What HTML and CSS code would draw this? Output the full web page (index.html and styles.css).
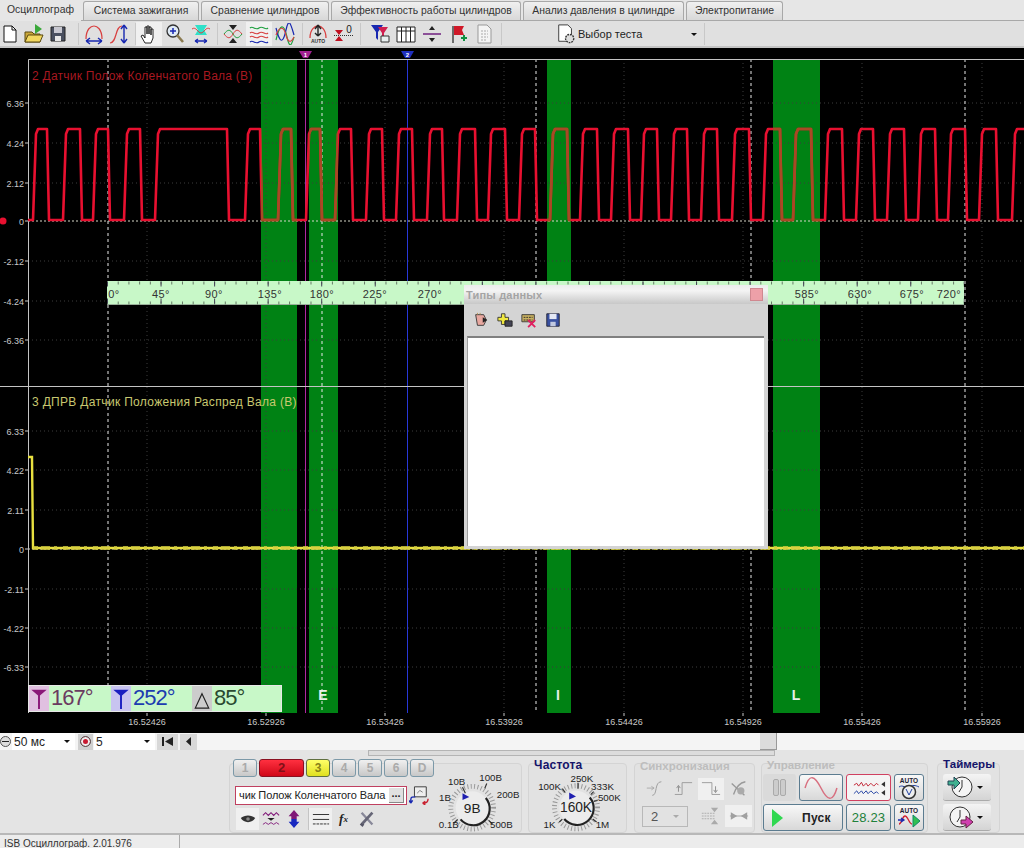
FILE: index.html
```html
<!DOCTYPE html>
<html>
<head>
    <meta charset="utf-8">
    <link rel="stylesheet" href="styles.css">
</head>
<body>
    <div class="tabs">
        <div class="tab active">Осциллограф</div>
        <div class="tab tab-w116">Система зажигания</div>
        <div class="tab tab-w128">Сравнение цилиндров</div>
        <div class="tab tab-w190">Эффективность работы цилиндров</div>
        <div class="tab tab-w161">Анализ давления в цилиндре</div>
        <div class="tab tab-w97">Электропитание</div>
    </div>

    <div class="toolbar">
        <div class="tb-group g1">
            <div class="tb-btn"><svg viewBox="0 0 22 22"><path d="M5 3h8l4 4v12H5z" fill="#fff" stroke="#111"/><path d="M13 3v4h4" fill="none" stroke="#111"/></svg></div>
            <div class="tb-btn"><svg viewBox="0 0 22 22"><path d="M2 9h7l2 2h6v8H2z" fill="#c9a63a" stroke="#5a4a10"/><path d="M2 19l3-7h15l-3 7z" fill="#f2d860" stroke="#5a4a10"/><path d="M12 1l7 5-7 5z" fill="#3aa83a"/></svg></div>
            <div class="tb-btn"><svg viewBox="0 0 22 22"><path d="M4 4h14v14H4z" fill="#4a5060" stroke="#222"/><path d="M7 4h8v6H7z" fill="#c8c8d0"/><path d="M8 13h6v5H8z" fill="#e8e8e8"/></svg></div>
        </div>
        <div class="tb-group g2">
            <div class="tb-btn"><svg viewBox="0 0 22 22"><path d="M3 16C3 6 8 3 11 3s8 3 8 13" fill="none" stroke="#d84040" stroke-width="1.2"/><path d="M3 18h16M3 18l4-3M3 18l4 3M19 18l-4-3M19 18l-4 3" fill="none" stroke="#1828b0" stroke-width="1.4"/></svg></div>
            <div class="tb-btn"><svg viewBox="0 0 22 22"><path d="M1 20C8 20 6 3 13 3" fill="none" stroke="#d84040" stroke-width="1.2"/><path d="M15 2v18M15 2l-3 4M15 2l3 4M15 20l-3-4M15 20l3-4" fill="none" stroke="#1828b0" stroke-width="1.4"/></svg></div>
        </div>
        <div class="tb-group g3">
            <div class="tb-btn on"><svg viewBox="0 0 22 22"><path d="M7 20l-4-7 2-1 2 3V4h2v7V3h2v8V4h2v8V6h2v9l-2 5z" fill="#fff" stroke="#111" stroke-width=".9"/></svg></div>
            <div class="tb-btn"><svg viewBox="0 0 22 22"><circle cx="9" cy="8" r="6" fill="#dfeaf5" stroke="#333" stroke-width="1.3"/><path d="M6 8h6M9 5v6" stroke="#1828b0" stroke-width="1.5"/><path d="M13 12l6 7" stroke="#8a7a50" stroke-width="2.6"/></svg></div>
            <div class="tb-btn"><svg viewBox="0 0 22 22"><path d="M5 2h12l-3 5 3 5H5l3-5z" fill="#30e0c8"/><path d="M2 6c4-3 6 4 9 4s5-7 9-4" fill="none" stroke="#d84040"/><path d="M5 18h12M5 18l3-2M5 18l3 2M17 18l-3-2M17 18l-3 2" fill="none" stroke="#1828b0" stroke-width="1.3"/></svg></div>
        </div>
        <div class="tb-group g4">
            <div class="tb-btn"><svg viewBox="0 0 22 22"><path d="M2 11c4-5 6-5 9 0s5 5 9 0" fill="none" stroke="#20a040"/><path d="M2 11c4 5 6 5 9 0s5-5 9 0" fill="none" stroke="#d84040"/><path d="M7 2h8l-4 5zM7 20h8l-4-5z" fill="#222"/></svg></div>
            <div class="tb-btn on"><svg viewBox="0 0 22 22"><path d="M2 5c3-3 5 3 9 0s6 3 9 0" fill="none" stroke="#20a040" stroke-width="1.2"/><path d="M2 10c3-3 5 3 9 0s6 3 9 0M2 14c3-3 5 3 9 0s6 3 9 0" fill="none" stroke="#d84040" stroke-width="1.2"/><path d="M2 19c3-3 5 3 9 0s6 3 9 0" fill="none" stroke="#1828b0" stroke-width="1.2"/></svg></div>
            <div class="tb-btn"><svg viewBox="0 0 22 22"><path d="M2 17C6 0 10 0 13 14s5 6 7 0" fill="none" stroke="#20a040" stroke-width="1.2"/><path d="M2 5c4 16 7 16 10 2s5-5 8 5" fill="none" stroke="#1828b0" stroke-width="1.2"/><path d="M2 12c4-10 8-8 10 0s5 8 8 2" fill="none" stroke="#d84040" stroke-width="1.2"/></svg></div>
        </div>
        <div class="tb-group g5">
            <div class="tb-btn"><svg viewBox="0 0 22 22"><path d="M3 15C3 6 8 3 11 3s8 3 8 12" fill="none" stroke="#d84040" stroke-width="1.3"/><path d="M11 2v11M11 2L8 6M11 2l3 4M11 13l-3-3M11 13l3-3" fill="none" stroke="#222" stroke-width="1.4"/><text class="auto-text" x="11" y="20">AUTO</text></svg></div>
            <div class="tb-btn"><svg viewBox="0 0 22 22"><path d="M2 7h8l-4 5zM2 18h8l-4-5z" fill="#c01020"/><path d="M1 12.5h20" stroke="#333" stroke-dasharray="1 1"/><text class="zero-text" x="16" y="10">0</text></svg></div>
        </div>
        <div class="tb-group g6">
            <div class="tb-btn"><svg viewBox="0 0 22 22"><path d="M2 2h12l-5 7v8l-2-2V9z" fill="#1828b0"/><path d="M9 4h10l-4 6v3h-2v-3z" fill="#d02050"/><path d="M12 13h8v6h-8z" fill="#e8f0f0" stroke="#333"/></svg></div>
            <div class="tb-btn"><svg viewBox="0 0 22 22"><path d="M2 4h18v15H2z" fill="#fff" stroke="#222"/><path d="M2 8h18M6.5 4v15M11 4v15M15.5 4v15" stroke="#222"/></svg></div>
            <div class="tb-btn"><svg viewBox="0 0 22 22"><path d="M2 11h18" stroke="#702080" stroke-width="1.5"/><path d="M11 3l-3 4h6zM11 19l-3-4h6z" fill="#222"/></svg></div>
            <div class="tb-btn"><svg viewBox="0 0 22 22"><path d="M6 3v17" stroke="#444" stroke-width="1.5"/><path d="M7 3h10l-2 4 2 5H7z" fill="#d01828"/><path d="M14 15h6M17 12v6" stroke="#109040" stroke-width="2"/></svg></div>
            <div class="tb-btn"><svg viewBox="0 0 22 22"><path d="M5 2h9l4 4v14H5z" fill="#f4f4f4" stroke="#999"/><path d="M8 8h7M8 11h7M8 14h7M8 17h5" stroke="#aaa" stroke-dasharray="2 1"/></svg></div>
        </div>
        <div class="test-select">
            <svg viewBox="0 0 22 22"><path d="M3 1h10l4 4v14H3z" fill="#fff" stroke="#333"/><circle cx="15" cy="16" r="4.5" fill="#ddd" stroke="#333" stroke-dasharray="2 1" stroke-width="1.5"/></svg>
            <span class="test-label">Выбор теста</span>
            <span class="arrow-down"></span>
        </div>
    </div>

    <div class="scope">
        <svg class="plot" viewBox="0 48 1024 685">
            <defs>
                <clipPath id="bandClip">
                    <rect x="261" y="59" width="36" height="654"/>
                    <rect x="309" y="59" width="29" height="654"/>
                    <rect x="547" y="59" width="24" height="654"/>
                    <rect x="773" y="59" width="47" height="654"/>
                </clipPath>
                <path id="crank" d="M28 220H33L36 134 38 129H47L49 220H63L66 134 68 129H80L82 220H93L96 134 98 129H108L110 220H124L127 134 129 129H140L142 220H155L158 134 160 129H227L229 220H245L248 134 250 129H260L262 220H278L281 134 283 129H291L293 220H306L309 134 311 129H320L322 220H335L338 134 340 129H351L353 220H366L369 134 371 129H382L384 220H396L399 134 401 129H412L414 220H427L430 134 432 129H442L444 220H457L460 134 462 129H475L477 220H488L491 134 493 129H505L507 220H519L522 134 524 129H535L537 220H550L553 134 555 129H567L569 220H580L583 134 585 129H597L599 220H611L614 134 616 129H628L630 220H641L644 134 646 129H657L659 220H671L674 134 676 129H687L689 220H701L704 134 706 129H717L719 220H732L735 134 737 129H749L751 220H763L766 134 768 129H780L782 220H793L796 134 798 129H811L813 220H825L828 134 830 129H842L844 220H856L859 134 861 129H873L875 220H887L890 134 892 129H904L906 220H918L921 134 923 129H935L937 220H948L951 134 953 129H965L967 220H979L982 134 984 129H996L998 220H1012L1015 134 1017 129H1024"/>
            </defs>

            <g fill="#008214">
                <rect x="261" y="59" width="36" height="654"/>
                <rect x="309" y="59" width="29" height="654"/>
                <rect x="547" y="59" width="24" height="654"/>
                <rect x="773" y="59" width="47" height="654"/>
            </g>

            <!-- dim grid -->
            <g class="grid-dim">
                <path d="M28 103H1024M28 143H1024M28 183H1024M28 261H1024M28 301H1024M28 340H1024M28 431H1024M28 470H1024M28 510H1024M28 589H1024M28 628H1024M28 667H1024"/>
                <path d="M147 59V713M266 59V713M385 59V713M504 59V713M624 59V713M743 59V713M862 59V713M982 59V713"/>
            </g>
            <path class="grid-deg" d="M108 59V713M322 59V713M536 59V713M751 59V713M965 59V713"/>
            <path class="grid-zero" d="M28 221H1024M28 549H1024"/>

            <path class="cursor-1" d="M305.5 59V713"/>
            <path class="cursor-2" d="M407.5 59V713"/>
            <path d="M299 51h13l-4 7h-5z" fill="#a02090"/>
            <path d="M401 51h13l-4 7h-5z" fill="#2030c0"/>
            <text class="cursor-num" x="305.5" y="57">1</text>
            <text class="cursor-num" x="407.5" y="57">2</text>

            <path class="frame" d="M28.5 713V59.5H1024M0 386.5H1024"/>

            <use href="#crank" class="trace-red"/>
            <use href="#crank" class="trace-red-band" clip-path="url(#bandClip)"/>
            <path class="trace-yellow" d="M28 457H32L33 548H1024"/>
            <path class="trace-yellow-noise" d="M33 548H1024"/>

            <circle cx="3" cy="221" r="3.5" fill="#e81030"/>

            <text class="label-red" x="32" y="80">2 Датчик Полож Коленчатого Вала (В)</text>
            <text class="label-yellow" x="32" y="406">3 ДПРВ Датчик Положения Распред Вала (В)</text>

            <g class="y-axis">
                <text x="24" y="107">6.36</text>
                <text x="24" y="147">4.24</text>
                <text x="24" y="187">2.12</text>
                <text x="24" y="225">0</text>
                <text x="24" y="265">-2.12</text>
                <text x="24" y="305">-4.24</text>
                <text x="24" y="344">-6.36</text>
                <text x="24" y="435">6.33</text>
                <text x="24" y="474">4.22</text>
                <text x="24" y="514">2.11</text>
                <text x="24" y="553">0</text>
                <text x="24" y="593">-2.11</text>
                <text x="24" y="632">-4.22</text>
                <text x="24" y="671">-6.33</text>
            </g>
            <path class="axis-ticks" d="M25 103H28M25 143H28M25 183H28M25 221H28M25 261H28M25 301H28M25 340H28M25 431H28M25 470H28M25 510H28M25 549H28M25 589H28M25 628H28M25 667H28M147 713V716M266 713V716M385 713V716M504 713V716M624 713V716M743 713V716M862 713V716M982 713V716"/>

            <g class="x-axis">
                <text x="147" y="725">16.52426</text>
                <text x="266" y="725">16.52926</text>
                <text x="385" y="725">16.53426</text>
                <text x="504" y="725">16.53926</text>
                <text x="624" y="725">16.54426</text>
                <text x="743" y="725">16.54926</text>
                <text x="862" y="725">16.55426</text>
                <text x="982" y="725">16.55926</text>
            </g>

            <g class="band-labels">
                <text x="277" y="700">D</text>
                <text x="323" y="700">E</text>
                <text x="558" y="700">I</text>
                <text x="796" y="700">L</text>
            </g>

            <!-- degree ruler -->
            <rect x="107" y="281" width="857" height="23" fill="#c8f8c8"/>
            <path d="M107 304.5H964" stroke="#9ab09a"/>
            <path class="ruler-minor" d="M107 283H964M107 303H964"/>
            <path class="ruler-major" d="M107 284H964M107 301H964"/>
            <g class="ruler-text">
                <text x="114" y="298">0°</text>
                <text x="161" y="298">45°</text>
                <text x="214" y="298">90°</text>
                <text x="270" y="298">135°</text>
                <text x="322" y="298">180°</text>
                <text x="375" y="298">225°</text>
                <text x="430" y="298">270°</text>
                <text x="807" y="298">585°</text>
                <text x="860" y="298">630°</text>
                <text x="912" y="298">675°</text>
                <text x="949" y="298">720°</text>
            </g>
        </svg>

        <div class="readout">
            <div class="rd-icon rd-mag"><svg viewBox="0 0 20 26"><path d="M2 4h16l-7 6v14H9V10z" fill="#8a1878"/></svg></div>
            <div class="rd-val rd-val-mag">167°</div>
            <div class="rd-icon rd-blue"><svg viewBox="0 0 20 26"><path d="M2 4h16l-7 6v14H9V10z" fill="#1a20c0"/></svg></div>
            <div class="rd-val rd-val-blue">252°</div>
            <div class="rd-icon rd-delta"><svg viewBox="0 0 20 26"><path d="M10 8l7 15H3z" fill="none" stroke="#222" stroke-width="1.2"/></svg></div>
            <div class="rd-val rd-val-delta">85°</div>
        </div>

        <div class="dialog">
            <div class="dialog-title">
                <span>Типы данных</span>
                <span class="dialog-close"></span>
            </div>
            <div class="dialog-tools">
                <svg viewBox="0 0 18 18"><path d="M3 3h9l3 6-3 6H5z" fill="#e8a8a0" stroke="#333"/><path d="M5 3V1M8 3V1" stroke="#b89050"/><path d="M11 6l5 3-5 3z" fill="#222"/></svg>
                <svg viewBox="0 0 18 18"><path d="M1 6h4V2h4v4h4v4H9v4H5v-4H1z" fill="#f0e840" stroke="#333"/><path d="M9 10h8v6H9z" fill="#445" stroke="#222"/></svg>
                <svg viewBox="0 0 18 18"><path d="M1 3h14v8H1z" fill="#c8b060" stroke="#333"/><path d="M3 6h10M3 9h10" stroke="#222" stroke-dasharray="2 1"/><path d="M8 9l8 8M16 9l-8 8" stroke="#e02060" stroke-width="2"/></svg>
                <svg viewBox="0 0 18 18"><path d="M2 2h14v14H2z" fill="#3850a0" stroke="#223"/><path d="M5 2h8v6H5z" fill="#e4e8f4"/><path d="M6 11h6v5H6z" fill="#c0c8e0"/></svg>
            </div>
            <div class="dialog-list"></div>
        </div>
    </div>

    <div class="timebar">
        <span class="round-btn minus"></span>
        <div class="time-select w-63"><span>50 мс</span><span class="arrow-down"></span></div>
        <span class="round-box"><span class="round-btn plus"></span></span>
        <div class="time-select w-61"><span>5</span><span class="arrow-down"></span></div>
        <div class="nav-btn w-21"><svg viewBox="0 0 13 9"><path d="M1 0h2v9H1zM12 0v9L4 4.5z" fill="#222"/></svg></div>
        <div class="nav-btn w-17"><svg viewBox="0 0 7 9"><path d="M6 0v9L1 4.5z" fill="#222"/></svg></div>
        <div class="thumb"></div>
    </div>

    <div class="panel">
        <div class="h-track"></div>

        <div class="group grp-channel">
            <div class="ch-left">
                <div class="channels">
                    <div class="ch">1</div>
                    <div class="ch ch-red">2</div>
                    <div class="ch ch-yellow">3</div>
                    <div class="ch">4</div>
                    <div class="ch">5</div>
                    <div class="ch">6</div>
                    <div class="ch">D</div>
                </div>
                <div class="field-row">
                    <div class="ch-field">
                        <span class="ch-text">чик Полож Коленчатого Вала</span>
                        <span class="dots-btn">...</span>
                    </div>
                    <svg class="swap-icon" viewBox="0 0 22 22"><path d="M6 2h13v11H6z" fill="#eee" stroke="#333"/><path d="M9 9l3-3 3 2" fill="none" stroke="#777"/><path d="M2 20v-4c0-3 2-3 5-3M2 20l-2-3M2 20l2-3" fill="none" stroke="#1828b0" stroke-width="1.5"/><path d="M21 15c0 3-2 5-6 5M15 20l3-2M15 20l3 2" fill="none" stroke="#c82030" stroke-width="1.5"/></svg>
                </div>
                <div class="ch-tools">
                    <div class="ch-tool on"><svg viewBox="0 0 20 20"><path d="M2 9c4-4 12-4 16 0-3 6-13 6-16 0z" fill="#333"/><circle cx="10" cy="10" r="2" fill="#888"/></svg></div>
                    <div class="ch-tool"><svg viewBox="0 0 20 20"><path d="M1 6l3-3 3 3 3-3 3 3 3-3 3 3" fill="none" stroke="#801878" stroke-width="1.2"/><path d="M6 9h8l-4 3z" fill="#222"/><path d="M1 16l3-2 3 2 3-2 3 2 3-2 3 2" fill="none" stroke="#801878"/></svg></div>
                    <div class="ch-tool"><svg viewBox="0 0 20 20"><path d="M10 0l6 7h-3v3H7V7H4z" fill="#801878"/><path d="M10 20l6-7h-3v-3H7v3H4z" fill="#1828c0"/></svg></div>
                    <div class="ch-tool on sep-left"><svg viewBox="0 0 20 20"><path d="M1 5h18M1 10.5h18" stroke="#222"/><path d="M1 15.5h18" stroke="#222" stroke-dasharray="3 1"/></svg></div>
                    <div class="ch-tool fx">f<sub>x</sub></div>
                    <div class="ch-tool"><svg viewBox="0 0 20 20"><path d="M4 3l12 13" stroke="#889" stroke-width="2.5"/><path d="M16 3L5 15" stroke="#667" stroke-width="3"/><path d="M2 16l3 3 2-3-3-2z" fill="#556"/></svg></div>
                </div>
            </div>
            <svg class="knob-a" viewBox="437 763 85 70">
                <circle cx="473" cy="808" r="22" class="knob-ticks"/>
                <circle cx="473" cy="808" r="17" fill="#ececec"/>
                <path d="M461 820A17 17 0 0 0 487 798" class="knob-arc"/>
                <path d="M466 793l-3-6M486 788l2-5M458 820l-4 4M490 821l4 4" stroke="#333" stroke-width="1.2"/>
                <path d="M463 793l7 4-7 3z" fill="#2020b0"/>
                <text class="knob-val" x="473" y="813">9В</text>
                <g class="knob-label">
                    <text x="457" y="785">10В</text>
                    <text x="492" y="781">100В</text>
                    <text x="510" y="798">200В</text>
                    <text x="503" y="829">500В</text>
                    <text x="449" y="829">0.1В</text>
                    <text x="445" y="801">1В</text>
                </g>
            </svg>
        </div>

        <div class="group grp-freq">
            <div class="grp-title">Частота</div>
            <svg class="knob-b" viewBox="528 764 99 69">
                <circle cx="576" cy="808" r="22" class="knob-ticks"/>
                <circle cx="576" cy="808" r="17" fill="#ececec"/>
                <path d="M564 820A17 17 0 0 0 590 798" class="knob-arc"/>
                <path d="M578 783v6M562 789l3 4M594 792l-3 3M598 801l-4 1M559 823l3-3M597 823l-4-3" stroke="#333" stroke-width="1.2"/>
                <path d="M569 793l7 4-7 3z" fill="#2020b0"/>
                <text class="knob-val" x="576" y="813">160K</text>
                <g class="knob-label">
                    <text x="582" y="782">250K</text>
                    <text x="549" y="790">100K</text>
                    <text x="603" y="790">333K</text>
                    <text x="610" y="802">500K</text>
                    <text x="549" y="829">1K</text>
                    <text x="603" y="829">1M</text>
                </g>
            </svg>
        </div>

        <div class="group grp-sync">
            <div class="grp-title off">Синхронизация</div>
            <div class="sync-row">
                <div class="sync-btn"><svg viewBox="0 0 22 22"><path d="M8 18C14 18 10 3 18 3" fill="none" stroke="#999"/><path d="M2 10h8M7 8l3 2-3 2" fill="none" stroke="#aaa"/></svg></div>
                <div class="sync-btn"><svg viewBox="0 0 22 22"><path d="M2 17h8V4h11" fill="none" stroke="#999"/><path d="M6 14V8M4 10l2-3 2 3" fill="none" stroke="#888"/></svg></div>
                <div class="sync-btn on"><svg viewBox="0 0 22 22"><path d="M1 4h11v13h9" fill="none" stroke="#999"/><path d="M16 8v6M14 12l2 3 2-3" fill="none" stroke="#888"/></svg></div>
                <div class="sync-btn"><svg viewBox="0 0 22 22"><path d="M3 5l14 13M18 3C12 4 8 8 5 17" fill="none" stroke="#999" stroke-width="1.5"/><circle cx="13" cy="13" r="4" fill="#aaa"/></svg></div>
            </div>
            <div class="sync-row">
                <div class="sync-select"><span>2</span><span class="arrow-down off"></span></div>
                <div class="sync-btn"><svg viewBox="0 0 22 22"><path d="M2 8h14M2 11h14M2 14h14" stroke="#aaa" stroke-dasharray="2 1"/><path d="M12 2h8l-4 5zM12 20h8l-4-5z" fill="#aaa"/></svg></div>
                <div class="sync-btn on"><svg viewBox="0 0 22 22"><path d="M2 7l7 4-7 4zM20 7l-7 4 7 4z" fill="#a0a0a0"/><path d="M1 11h20" stroke="#a0a0a0"/></svg></div>
            </div>
        </div>

        <div class="group grp-ctrl">
            <div class="grp-title off">Управление</div>
            <div class="ctrl-grid">
                <div class="ctrl flat"><span class="pause"></span><span class="pause"></span></div>
                <div class="ctrl"><svg viewBox="0 0 32 20"><path d="M1 10C5 -4 10 -2 16 10s11 14 15 0" fill="none" stroke="#d87080" stroke-width="1.4"/></svg></div>
                <div class="ctrl red-edge"><svg viewBox="0 0 36 20"><path d="M2 7l3-2 2 3 3-4 2 4 3-3 2 3 3-3 3 3 3-3 2 2" fill="none" stroke="#c02030"/><path d="M2 16l3-3 2 3 3-3 2 3 3-3 2 3 3-3 3 3 3-2 2 2" fill="none" stroke="#2040a0"/><path d="M35 3v6l-4-3zM35 12v6l-4-3z" fill="#333"/></svg></div>
                <div class="ctrl"><svg viewBox="0 0 24 24"><text class="auto-text dark" x="12" y="7">AUTO</text><path d="M2 11c4-3 6 2 10 0s6-2 10 0" fill="none" stroke="#2040a0"/><circle cx="12" cy="16" r="6.5" fill="#eee" stroke="#333" stroke-width="1.5"/><path d="M9 13l3 6 3-6" fill="none" stroke="#2040a0"/></svg></div>
                <div class="ctrl start">
                    <svg viewBox="0 0 14 20"><path d="M2 1l11 9-11 9z" fill="#30d850"/></svg>
                    <span class="start-text">Пуск</span>
                </div>
                <div class="ctrl rate">28.23</div>
                <div class="ctrl"><svg viewBox="0 0 24 24"><text class="auto-text dark" x="12" y="7">AUTO</text><path d="M2 18c3 0 3-8 6-8s4 8 7 8" fill="none" stroke="#d02030" stroke-width="1.3"/><path d="M1 14h6M4 12l3 2-3 2" fill="none" stroke="#1828b0" stroke-width="1.3"/><path d="M16 9l7 6-7 6z" fill="#30c050" stroke="#186"/></svg></div>
            </div>
        </div>

        <div class="group grp-timers">
            <div class="grp-title">Таймеры</div>
            <div class="timer-btn">
                <svg viewBox="0 0 28 24"><circle cx="15" cy="12" r="10" fill="#f4f4f4" stroke="#333"/><path d="M15 5v7l-3 5" fill="none" stroke="#333"/><path d="M1 6h6V2l6 6-6 6v-4H1z" fill="#40b090" stroke="#245"/></svg>
                <span class="arrow-down"></span>
            </div>
            <div class="timer-btn">
                <svg viewBox="0 0 28 24"><circle cx="13" cy="12" r="10" fill="#f4f4f4" stroke="#333"/><path d="M13 5v7l-3 5" fill="none" stroke="#333"/><path d="M14 15h5v-4l7 6-7 6v-4h-5z" fill="#d040b0" stroke="#624"/></svg>
                <span class="arrow-down"></span>
            </div>
        </div>
    </div>

    <div class="status">
        <div class="status-cell">ISB Осциллограф. 2.01.976</div>
    </div>
</body>
</html>
```

FILE: styles.css
```css
html, body {
    margin: 0;
    padding: 0;
}

body {
    width: 1024px;
    height: 848px;
    overflow: hidden;
    display: flex;
    flex-direction: column;
    font-family: 'Liberation Sans', Arial, sans-serif;
    font-size: 11px;
    color: #222;
    background: #e4e4e4;
}

/* tabs */
.tabs {
    height: 21px;
    display: flex;
    align-items: flex-end;
    gap: 2px;
    background: #e6e6e6;
    border-bottom: 1px solid #a8a8a8;
    box-sizing: border-box;
}

.tab {
    height: 19px;
    line-height: 18px;
    padding: 0;
    text-align: center;
    box-sizing: border-box;
    background: linear-gradient(#f0f0f0, #d8d8d8);
    border: 1px solid #a8a8a8;
    border-bottom: none;
    border-radius: 3px 3px 0 0;
    color: #333;
    font-size: 10.4px;
}

.tab.active {
    width: 81px;
    height: 20px;
    background: #e6e6e6;
    border: none;
    margin-bottom: -1px;
}

.tab-w116 { width: 116px; }
.tab-w128 { width: 128px; }
.tab-w190 { width: 190px; }
.tab-w161 { width: 161px; }
.tab-w97 { width: 97px; }

/* toolbar */
.toolbar {
    height: 27px;
    display: flex;
    align-items: stretch;
    background: #e0e0e0;
    border-bottom: 2px solid #c4c4c4;
    box-sizing: border-box;
}

.tb-group {
    display: flex;
    align-items: center;
    border-right: 1px solid #c8c8c8;
    margin: 2px 0 1px;
}

.g1 { margin-left: -2px; padding-right: 8px; }
.g2 { padding: 0 2px; }
.g3 { padding-right: 3px; }
.g4 { padding: 0 4px 0 2px; }
.g5 { padding: 0 3px 0 2px; }
.g6 { padding: 0 4px 0 6px; }
.g1 .tb-btn { width: 24px; }

.tb-btn {
    width: 26px;
    height: 24px;
    display: flex;
    align-items: center;
    justify-content: center;
}

.tb-btn.on {
    background: #f0f0f0;
}

.tb-btn svg {
    width: 22px;
    height: 22px;
}

.auto-text {
    font-size: 5px;
    font-weight: bold;
    text-anchor: middle;
    fill: #333;
}

.auto-text.dark {
    font-size: 6.5px;
    fill: #223;
}

.zero-text {
    font-size: 10px;
    text-anchor: middle;
    fill: #222;
}

.test-select {
    width: 203px;
    display: flex;
    align-items: center;
    padding-left: 54px;
    box-sizing: border-box;
    border-right: 1px solid #c8c8c8;
    margin: 2px 0 1px;
}

.test-select svg {
    width: 20px;
    height: 20px;
}

.test-label {
    margin-left: 2px;
    font-size: 11px;
    width: 113px;
}

.arrow-down {
    display: inline-block;
    width: 0;
    height: 0;
    border-left: 3px solid transparent;
    border-right: 3px solid transparent;
    border-top: 3px solid #111;
}

.arrow-down.off {
    border-top-color: #aaa;
}

/* scope area */
.scope {
    position: relative;
    height: 685px;
    background: #000;
}

.plot {
    display: block;
    width: 1024px;
    height: 685px;
}

.grid-dim path {
    fill: none;
    stroke: #3c3c3c;
    stroke-dasharray: 1 3;
}

.grid-deg {
    fill: none;
    stroke: #e8e8e8;
    stroke-dasharray: 3 3;
}

.grid-zero {
    fill: none;
    stroke: #d8d8c8;
    stroke-dasharray: 2 2;
}

.cursor-1 { stroke: #b028a0; }
.cursor-2 { stroke: #2838d8; }

.cursor-num {
    font-size: 6px;
    font-weight: bold;
    text-anchor: middle;
    fill: #fff;
}

.frame {
    fill: none;
    stroke: #c4c4c4;
}

.trace-red {
    fill: none;
    stroke: #e81030;
    stroke-width: 2.6;
    stroke-linejoin: round;
}

.trace-red-band {
    fill: none;
    stroke: #a84a24;
    stroke-width: 2.6;
    stroke-linejoin: round;
}

.trace-yellow {
    fill: none;
    stroke: #e8e040;
    stroke-width: 2.4;
}

.trace-yellow-noise {
    fill: none;
    stroke: #d8d040;
    stroke-width: 3.4;
    stroke-dasharray: 5 3 9 4 3 6;
}

.label-red {
    font-size: 12px;
    letter-spacing: 0.25px;
    fill: #a81820;
}

.label-yellow {
    font-size: 12px;
    letter-spacing: 0.32px;
    fill: #c8c870;
}

.y-axis text {
    font-size: 9px;
    text-anchor: end;
    fill: #c8c8c8;
}

.axis-ticks {
    fill: none;
    stroke: #c8c8c8;
}

.x-axis text {
    font-size: 9px;
    text-anchor: middle;
    fill: #c8c8c8;
}

.band-labels text {
    font-size: 14px;
    font-weight: bold;
    text-anchor: middle;
    fill: #e8f0e8;
}

.ruler-minor {
    fill: none;
    stroke: #667a66;
    stroke-width: 3;
    stroke-dasharray: 1 9.71;
}

.ruler-major {
    fill: none;
    stroke: #445;
    stroke-width: 5;
    stroke-dasharray: 1 52.55;
}

.ruler-text text {
    font-size: 11px;
    letter-spacing: 0.4px;
    text-anchor: middle;
    fill: #333;
}

/* angle readout */
.readout {
    position: absolute;
    left: 28px;
    top: 637px;
    width: 254px;
    height: 27px;
    display: flex;
    align-items: stretch;
    box-sizing: border-box;
    background: #c8f8c8;
    border: 1px solid #e8e8e8;
    font-size: 22px;
    letter-spacing: -1px;
    line-height: 24px;
}

.rd-icon {
    width: 20px;
    flex: none;
}

.rd-icon svg {
    width: 20px;
    height: 25px;
    display: block;
}

.rd-mag { background: #e0c0e0; }
.rd-blue { background: #c8c4f0; }
.rd-delta { background: #cccccc; }

.rd-val {
    padding-left: 2px;
    white-space: nowrap;
    box-sizing: content-box;
}

.rd-val-mag { width: 60px; color: #6a3a60; }
.rd-val-blue { width: 59px; color: #1c3cb0; }
.rd-val-delta { color: #2a4a30; }

/* floating dialog */
.dialog {
    position: absolute;
    left: 464px;
    top: 237px;
    width: 304px;
    height: 264px;
    display: flex;
    flex-direction: column;
    background: #d4d4d4;
}

.dialog-title {
    height: 19px;
    display: flex;
    align-items: center;
    justify-content: space-between;
    padding: 0 5px 0 2px;
    background: linear-gradient(#ececec, #f4f4f4 30%, #c8c8c8);
    font-size: 11px;
    font-weight: bold;
    letter-spacing: 0.2px;
    color: #a4a4a4;
}

.dialog-close {
    width: 13px;
    height: 13px;
    background: #eda0a8;
    border: 1px solid #d08890;
    box-sizing: border-box;
}

.dialog-tools {
    height: 32px;
    display: flex;
    align-items: center;
    gap: 8px;
    padding-left: 9px;
}

.dialog-tools svg {
    width: 16px;
    height: 16px;
}

.dialog-list {
    flex: 1;
    margin: 0 4px 3px 3px;
    background: #fff;
    border-top: 2px solid #808080;
    border-left: 1px solid #a0a0a0;
}

/* time bar */
.timebar {
    position: relative;
    height: 17px;
    display: flex;
    align-items: center;
    background: #f4f4f4;
    font-size: 12px;
}

.round-btn {
    display: block;
    width: 11px;
    height: 11px;
    border-radius: 50%;
    border: 1px solid #555;
    box-sizing: border-box;
    background: #ddd;
    flex: none;
    position: relative;
}

.round-btn.minus::after {
    content: "";
    position: absolute;
    left: 1px;
    right: 1px;
    top: 4px;
    height: 1px;
    background: #222;
}

.round-box {
    width: 15px;
    height: 16px;
    margin-left: 3px;
    background: #d0d0d0;
    display: flex;
    align-items: center;
    justify-content: center;
}

.round-btn.plus {
    background: #c81830;
    box-shadow: inset 0 0 0 2px #eee;
}

.time-select {
    height: 17px;
    display: flex;
    align-items: center;
    justify-content: space-between;
    padding: 0 5px 0 2px;
    margin-left: 1px;
    box-sizing: border-box;
    background: #fff;
}

.w-63 { width: 63px; }
.w-61 { width: 61px; }

.nav-btn {
    height: 16px;
    margin-left: 2px;
    background: #d8d8d8;
    display: flex;
    align-items: center;
    justify-content: center;
}

.nav-btn svg {
    height: 9px;
}

.w-21 { width: 21px; }
.w-17 { width: 17px; }

.thumb {
    position: absolute;
    left: 760px;
    top: 0;
    width: 16px;
    height: 16px;
    background: #dcdcdc;
    border-bottom: 1px solid #999;
    border-right: 1px solid #999;
}

/* bottom panel */
.panel {
    position: relative;
    height: 85px;
    display: flex;
    align-items: flex-start;
    box-sizing: border-box;
    padding: 13px 0 0 229px;
    background: #e4e4e4;
    border-bottom: 2px solid #b8b8b8;
}

.h-track {
    position: absolute;
    left: 368px;
    top: 0;
    width: 407px;
    height: 6px;
    box-sizing: border-box;
    background: #dcdcdc;
    border: 1px solid #b4b4b4;
}

.group {
    position: relative;
    height: 70px;
    box-sizing: border-box;
    border: 1px solid #d4d4d4;
    border-radius: 4px;
    background: #e2e2e2;
}

.grp-channel {
    width: 293px;
    margin-right: 6px;
    display: flex;
    justify-content: space-between;
}

.grp-freq {
    width: 99px;
    margin-right: 7px;
}

.grp-sync {
    width: 121px;
    margin-right: 6px;
    padding: 9px 0 0 7px;
}

.grp-ctrl {
    width: 167px;
    margin-right: 9px;
    padding: 10px 0 0 1px;
}

.grp-timers {
    width: 63px;
    padding: 10px 0 0 5px;
}

.grp-title {
    position: absolute;
    left: 5px;
    top: -6px;
    font-size: 12px;
    font-weight: bold;
    color: #15156a;
    letter-spacing: 0.2px;
}

.grp-title.off {
    color: #bdbdbd;
    font-size: 11.5px;
    letter-spacing: 0;
}

.grp-sync .grp-title { left: 5px; top: -4px; }
.grp-ctrl .grp-title { left: 5px; top: -5px; }
.grp-timers .grp-title { font-size: 11.5px; letter-spacing: 0; }

.ch-left {
    width: 208px;
    margin-left: 3px;
    display: flex;
    flex-direction: column;
}

.channels {
    display: flex;
    gap: 2px;
    margin: -5px 0 0 0;
}

.ch {
    width: 24px;
    height: 18px;
    box-sizing: border-box;
    border: 1px solid #7c99a8;
    border-radius: 3px;
    background: linear-gradient(#f0f0f0, #c8c8c8);
    color: #aaa;
    font-size: 12px;
    font-weight: bold;
    line-height: 16px;
    text-align: center;
}

.ch-red {
    width: 45px;
    border-color: #8a1020;
    background: linear-gradient(#ff3040, #d00818);
    color: #801018;
    font-size: 13px;
}

.ch-yellow {
    border-color: #607040;
    background: linear-gradient(#ffff68, #e0e020);
    color: #888018;
}

.field-row {
    display: flex;
    align-items: center;
    margin-top: 8px;
}

.ch-field {
    width: 172px;
    height: 19px;
    margin-left: 2px;
    box-sizing: border-box;
    display: flex;
    align-items: center;
    justify-content: space-between;
    padding: 0 2px 0 3px;
    background: #fff;
    border: 1px solid #c04060;
    white-space: nowrap;
}

.ch-text {
    font-size: 11px;
    letter-spacing: -0.1px;
}

.dots-btn {
    width: 15px;
    height: 15px;
    line-height: 10px;
    text-align: center;
    background: #e0e0e0;
    border-right: 1px solid #888;
    border-bottom: 1px solid #888;
    box-sizing: border-box;
    font-weight: bold;
}

.swap-icon {
    width: 20px;
    height: 20px;
    margin-left: 2px;
}

.ch-tools {
    display: flex;
    margin: 3px 0 0 3px;
}

.ch-tool {
    width: 23px;
    height: 22px;
    display: flex;
    align-items: center;
    justify-content: center;
}

.ch-tool.on {
    background: #f0f0f0;
}

.sep-left {
    margin-left: 3px;
    border-left: 1px solid #c4c4c4;
}

.ch-tool svg {
    width: 18px;
    height: 18px;
}

.fx {
    font-family: 'Liberation Serif', serif;
    font-size: 13px;
    font-style: italic;
    font-weight: bold;
}

.fx sub {
    font-size: 9px;
    line-height: 0;
}

.knob-a {
    width: 85px;
    height: 68px;
    flex: none;
}

.knob-b {
    width: 97px;
    height: 68px;
    display: block;
}

.knob-ticks {
    fill: none;
    stroke: #999;
    stroke-width: 5;
    stroke-dasharray: 1 2.5;
}

.knob-arc {
    fill: none;
    stroke: #222;
    stroke-width: 2.2;
}

.knob-val {
    font-size: 14px;
    text-anchor: middle;
    fill: #222;
}

.knob-label text {
    font-size: 10px;
    text-anchor: middle;
    fill: #222;
}

.sync-row {
    display: flex;
    align-items: center;
    margin-top: 5px;
}

.sync-btn {
    width: 27px;
    height: 22px;
    margin-right: 2px;
    display: flex;
    align-items: center;
    justify-content: center;
}

.sync-btn.on {
    background: #f0f0f0;
}

.sync-btn svg {
    width: 20px;
    height: 20px;
}

.sync-select {
    width: 46px;
    height: 21px;
    margin-right: 9px;
    box-sizing: border-box;
    display: flex;
    align-items: center;
    justify-content: space-between;
    padding: 0 8px 0 8px;
    border: 1px solid #b8b8b8;
    font-size: 13px;
    color: #555;
}

.ctrl-grid {
    display: grid;
    grid-template-columns: 33px 44px 45px 30px;
    grid-auto-rows: 27px;
    gap: 3px;
}

.ctrl {
    box-sizing: border-box;
    display: flex;
    align-items: center;
    justify-content: center;
    background: linear-gradient(#f8f8f8, #d8d8d8);
    border: 1px solid #5c7c90;
    border-radius: 3px;
}

.ctrl svg {
    width: 24px;
    height: 24px;
}

.ctrl:nth-child(2) svg,
.ctrl:nth-child(3) svg {
    width: 34px;
}

.ctrl.flat {
    gap: 1px;
    border: none;
    background: #dadada;
}

.pause {
    width: 4px;
    height: 15px;
    border: 1px solid #aaa;
    border-radius: 2px;
    background: #ccc;
}

.ctrl.red-edge {
    border-color: #d04060;
    background: #f4f4f4;
}

.ctrl.start {
    grid-column: span 2;
    justify-content: flex-start;
    padding-left: 6px;
    font-weight: bold;
    font-size: 12px;
}

.ctrl.start svg {
    width: 14px;
    height: 20px;
}

.start-text {
    margin-left: 18px;
    letter-spacing: 0.3px;
}

.ctrl.rate {
    font-size: 13px;
    color: #20803a;
    letter-spacing: 0.2px;
}

.timer-btn {
    width: 48px;
    height: 27px;
    margin-bottom: 3px;
    box-sizing: border-box;
    display: flex;
    align-items: center;
    gap: 2px;
    padding-left: 4px;
    background: linear-gradient(#f4f4f4, #d4d4d4);
    border-radius: 3px;
    border-bottom: 1px solid #aaa;
}

.timer-btn svg {
    width: 28px;
    height: 24px;
}

/* status bar */
.status {
    height: 13px;
    overflow: hidden;
    background: #ececec;
}

.status-cell {
    width: 180px;
    height: 13px;
    padding: 3px 0 0 4px;
    box-sizing: border-box;
    border-right: 1px solid #aaa;
    line-height: 12px;
    font-size: 10px;
    color: #333;
    white-space: nowrap;
}
```
